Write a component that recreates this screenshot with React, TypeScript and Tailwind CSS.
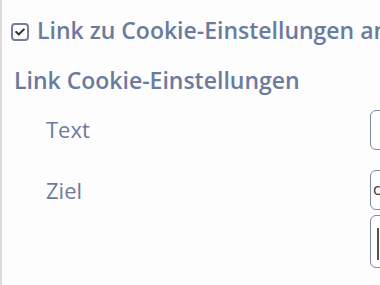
import { FaCheck } from "react-icons/fa";

function App() {
  return (
    <div className="w-[380px] h-[285px] overflow-hidden bg-[#fdfdfd] border-l-2 border-[#dcdcdc] font-['Open_Sans',sans-serif] text-[#6b7b9f]">
      <div className="w-[700px] pl-[9px] pt-[14px]">
        <label className="flex items-start gap-[8px] h-[32px]">
          <span className="mt-[9px] flex items-center justify-center w-[18px] h-[18px] rounded-[4px] border-2 border-[#737f9b] bg-white">
            <FaCheck className="text-[#333] w-[10px] h-[10px]" />
          </span>
          <span className="text-[23px] font-semibold leading-[32px] whitespace-nowrap">
            Link zu Cookie-Einstellungen anzeigen
          </span>
        </label>

        <h3 className="mt-[18px] pl-[3px] text-[23px] font-semibold leading-[32px]">
          Link Cookie-Einstellungen
        </h3>

        <div className="mt-[14px] flex flex-col">
          <div className="flex h-[40px]">
            <div className="w-[359px] pl-[35px] pt-[4px] text-[22px] leading-[30px]">Text</div>
            <div className="w-[300px] h-[40px] rounded-[6px] border-[1.5px] border-[#7d8aa8] bg-white" />
          </div>
          <div className="flex mt-[20px]">
            <div className="w-[359px] pl-[35px] pt-[5px] text-[22px] leading-[30px]">Ziel</div>
            <div className="flex flex-col gap-[5px]">
              <div className="w-[300px] h-[40px] rounded-[6px] border-[1.5px] border-[#7d8aa8] bg-white pl-[2px] text-[16px] leading-[37px] text-[#333]">
                cookie-settings
              </div>
              <div className="w-[300px] h-[53px] rounded-[6px] border-[1.5px] border-[#7d8aa8] bg-white pl-[6px] pt-[12px]">
                <div className="w-[2px] h-[32px] bg-[#555]" />
              </div>
            </div>
          </div>
        </div>
      </div>
    </div>
  );
}

export default App;
